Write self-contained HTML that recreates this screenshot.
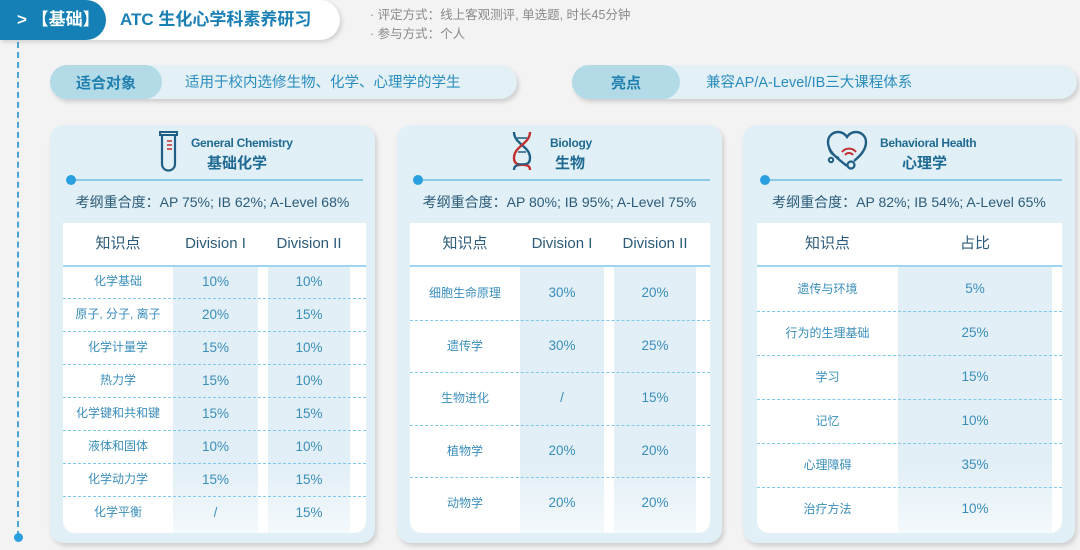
<!DOCTYPE html>
<html><head><meta charset="utf-8"><style>
*{margin:0;padding:0;box-sizing:border-box}
body{width:1080px;height:550px;background:#f3f3f3;position:relative;overflow:hidden;font-family:"Liberation Sans","Noto Sans CJK SC",sans-serif}
.a{position:absolute}
.info{color:#8a8a8a;font-size:12.5px}
.pill{position:absolute;height:34px;border-radius:17px;background:#e3f0f6;box-shadow:2px 3px 4px rgba(0,0,0,.15)}
.pill .l{position:absolute;left:0;top:0;height:34px;border-radius:17px;background:#b2dbe7;color:#1f7fae;font-weight:bold;font-size:15px;display:flex;align-items:center;justify-content:center}
.pill .r{position:absolute;top:1px;line-height:34px;color:#2a8dbf;font-size:14.5px}
.card{position:absolute;top:125px;height:418px;border-radius:14px;background:#e1eff6;box-shadow:2px 3px 5px rgba(0,0,0,.15)}
.en{position:absolute;color:#1f6a93;font-weight:bold;font-size:12px;letter-spacing:-.3px}
.cn{position:absolute;color:#1f6a93;font-weight:bold;font-size:15px}
.hl{position:absolute;height:2px;background:#8ccbe8;top:179px}
.dot{position:absolute;width:10px;height:10px;border-radius:5px;background:#2a9fe0;top:175px}
.ov{position:absolute;top:192px;color:#2c5c7a;font-size:14px;text-align:center}
.tbl{position:absolute;top:223px;background:#fff;border-radius:0 0 12px 12px;overflow:hidden}
.sh{position:absolute;top:43px;bottom:0;background:linear-gradient(#e2eff6 75%,#f4f9fc)}
.th{position:absolute;top:0;height:42px;line-height:42px;color:#2c5c7a;font-size:15px;text-align:center}
.hb{position:absolute;top:42px;left:0;right:0;height:2px;background:#9fd5ef}
.td{position:absolute;text-align:center;color:#3a8ebb;font-size:13.5px}
.tn{font-size:12px}
.ds{position:absolute;left:0;right:0;border-top:1.5px dashed #7fc9ee}
</style></head><body>

<div class="a" style="left:0;top:0;width:340px;height:40px;border-radius:0 20px 20px 0;background:#fff;box-shadow:2px 2px 4px rgba(0,0,0,.15)"></div>
<div class="a" style="left:0;top:0;width:106px;height:40px;border-radius:0 20px 20px 0;background:#1580b5;color:#fff;font-weight:bold;font-size:17px;line-height:40px;padding-left:17px">&gt; 【基础】</div>
<div class="a" style="left:120px;top:0;line-height:40px;color:#1a80b4;font-weight:bold;font-size:17px">ATC 生化心学科素养研习</div>
<div class="a info" style="left:370px;top:4px">· 评定方式：线上客观测评, 单选题, 时长45分钟</div>
<div class="a info" style="left:370px;top:23px">· 参与方式：个人</div>
<div class="a" style="left:17px;top:42px;height:495px;border-left:2px dashed #4aa3d3"></div>
<div class="a" style="left:14px;top:533px;width:9px;height:9px;border-radius:5px;background:#2a9fe0"></div>

<div class="pill" style="left:50px;top:65px;width:467px"><div class="l" style="width:112px">适合对象</div><div class="r" style="left:135px">适用于校内选修生物、化学、心理学的学生</div></div>
<div class="pill" style="left:572px;top:65px;width:505px"><div class="l" style="width:108px">亮点</div><div class="r" style="left:134px">兼容AP/A-Level/IB三大课程体系</div></div>

<div class="card" style="left:50px;width:325px"></div>
<svg class="a" style="left:158px;top:130px" width="22" height="42" viewBox="0 0 22 42"><rect x="2" y="2" width="17" height="3" fill="none" stroke="#1f5f86" stroke-width="2"/><path d="M4 5V34a6.5 6.5 0 0 0 13 0V5" fill="none" stroke="#1f5f86" stroke-width="2.2"/><path d="M9 11h5M9 15h5M9 19h5" stroke="#c03030" stroke-width="1.6"/></svg>
<div class="en" style="left:191px;top:136px">General Chemistry</div>
<div class="cn" style="left:207px;top:152px">基础化学</div>
<div class="hl" style="left:71px;width:292px"></div><div class="dot" style="left:66px"></div>
<div class="ov" style="left:50px;width:325px">考纲重合度：AP 75%; IB 62%; A-Level 68%</div>
<div class="tbl" style="left:63px;width:303px;height:310px">
<div class="sh" style="left:110px;width:85px"></div><div class="sh" style="left:205px;width:82px"></div>
<div class="th" style="left:0;width:110px">知识点</div><div class="th" style="left:110px;width:85px">Division I</div><div class="th" style="left:205px;width:82px">Division II</div>
<div class="hb"></div>
</div>

<div class="card" style="left:397px;width:325px"></div>
<svg class="a" style="left:510px;top:130px" width="24" height="42" viewBox="0 0 24 42"><path d="M4 2C4 14 20 16 20 28S4 30 4 40" fill="none" stroke="#1f5f86" stroke-width="2.4"/><path d="M20 2C20 14 4 16 4 28S20 30 20 40" fill="none" stroke="#c03030" stroke-width="2.4"/><path d="M7 8h10M7 34h10M8 22h8" stroke="#1f5f86" stroke-width="1.5"/></svg>
<div class="en" style="left:550px;top:136px">Biology</div>
<div class="cn" style="left:555px;top:152px">生物</div>
<div class="hl" style="left:418px;width:292px"></div><div class="dot" style="left:413px"></div>
<div class="ov" style="left:397px;width:325px">考纲重合度：AP 80%; IB 95%; A-Level 75%</div>
<div class="tbl" style="left:410px;width:300px;height:310px">
<div class="sh" style="left:110px;width:84px"></div><div class="sh" style="left:204px;width:82px"></div>
<div class="th" style="left:0;width:110px">知识点</div><div class="th" style="left:110px;width:84px">Division I</div><div class="th" style="left:204px;width:82px">Division II</div>
<div class="hb"></div>
</div>

<div class="card" style="left:743px;width:332px"></div>
<svg class="a" style="left:825px;top:130px" width="44" height="40" viewBox="0 0 44 40"><path d="M22 36C12 28 3 22 3 12 3 6 8 2 13 2c4 0 7 2 9 5 2-3 5-5 9-5 5 0 10 4 10 10 0 8-6 14-12 19" fill="none" stroke="#1f5f86" stroke-width="2.4"/><path d="M4 16c0 8 6 10 10 12" fill="none" stroke="#1f5f86" stroke-width="2"/><circle cx="6" cy="30" r="2.2" fill="none" stroke="#1f5f86" stroke-width="2"/><circle cx="26" cy="35" r="3.5" fill="none" stroke="#1f5f86" stroke-width="2.2"/><path d="M17 22a9 9 0 0 1 14 0M20 25a5 5 0 0 1 8 0" fill="none" stroke="#c03030" stroke-width="2"/></svg>
<div class="en" style="left:880px;top:136px">Behavioral Health</div>
<div class="cn" style="left:902px;top:152px">心理学</div>
<div class="hl" style="left:765px;width:297px"></div><div class="dot" style="left:760px"></div>
<div class="ov" style="left:743px;width:332px">考纲重合度：AP 82%; IB 54%; A-Level 65%</div>
<div class="tbl" style="left:757px;width:305px;height:310px">
<div class="sh" style="left:141px;width:154px"></div>
<div class="th" style="left:0;width:141px">知识点</div><div class="th" style="left:141px;width:154px">占比</div>
<div class="hb"></div>
</div>

<div id="rows"></div>
<script>
function rows(x,widths,data,top,h){
  let s='';
  data.forEach((r,i)=>{
    let cy=top+i*h;
    if(i>0) s+=`<div class="ds" style="left:${x}px;width:${widths.total}px;right:auto;top:${cy}px"></div>`;
    r.forEach((t,j)=>{
      s+=`<div class="td ${j==0?'tn':''}" style="left:${widths.c[j][0]+x}px;width:${widths.c[j][1]}px;top:${cy}px;height:${h}px;line-height:${h}px">${t}</div>`;
    });
  });
  return s;
}
let html='';
html+=rows(63,{total:303,c:[[0,110],[110,85],[205,82]]},[["化学基础","10%","10%"],["原子, 分子, 离子","20%","15%"],["化学计量学","15%","10%"],["热力学","15%","10%"],["化学键和共和键","15%","15%"],["液体和固体","10%","10%"],["化学动力学","15%","15%"],["化学平衡","/","15%"]],265,33);
html+=rows(410,{total:300,c:[[0,110],[110,84],[204,82]]},[["细胞生命原理","30%","20%"],["遗传学","30%","25%"],["生物进化","/","15%"],["植物学","20%","20%"],["动物学","20%","20%"]],267,52.5);
html+=rows(757,{total:305,c:[[0,141],[141,154]]},[["遗传与环境","5%"],["行为的生理基础","25%"],["学习","15%"],["记忆","10%"],["心理障碍","35%"],["治疗方法","10%"]],267,44);
document.getElementById('rows').innerHTML=html;
</script>
</body></html>
